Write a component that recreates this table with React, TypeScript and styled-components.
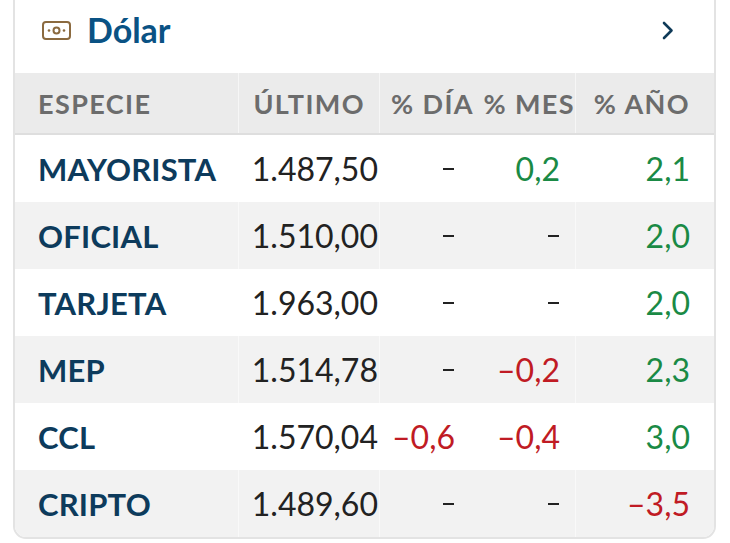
import React from "react";
import styled, { createGlobalStyle } from "styled-components";

const Global = createGlobalStyle`
  html, body { margin: 0; padding: 0; background: #ffffff; }
  body { font-family: Lato, "Open Sans", sans-serif; }
`;

const Page = styled.div`
  padding: 0 14px 0 13px;
  overflow: hidden;
  height: 543px;
  box-sizing: border-box;
`;

const Card = styled.div`
  margin-top: -14px;
  border: 2px solid #e3e3e3;
  border-radius: 13px;
  overflow: hidden;
  background: #fff;
`;

const TitleBar = styled.div`
  height: 85px;
  display: flex;
  align-items: center;
  padding: 0 40px 0 27px;
  box-sizing: border-box;
`;

const Title = styled.h2`
  margin: 0 0 0 16px;
  font-family: Lato, sans-serif;
  font-weight: 700;
  font-size: 34px;
  color: #0a5284;
  flex: 1;
  line-height: 1;
  position: relative;
  top: -1px;
`;

const columns = "223px 141px 101px 95px 1fr";

const HeadRow = styled.div`
  display: grid;
  grid-template-columns: ${columns};
  height: 60px;
  background: #ebebeb;
  border-bottom: 2px solid #dedede;
`;

const Row = styled.div<{ $alt: boolean }>`
  display: grid;
  grid-template-columns: ${columns};
  height: 67px;
  background: ${(p) => (p.$alt ? "#f2f2f2" : "#ffffff")};
`;

const HeadCell = styled.div<{ $pr: number; $left?: boolean; $divider?: boolean }>`
  display: flex;
  align-items: center;
  justify-content: ${(p) => (p.$left ? "flex-start" : "flex-end")};
  padding: ${(p) => (p.$left ? "0 0 0 23px" : `0 ${p.$pr}px 0 0`)};
  font-family: Lato, sans-serif;
  font-weight: 700;
  font-size: 27px;
  letter-spacing: 1.4px;
  color: #6c6c6c;
  white-space: nowrap;
  border-left: ${(p) => (p.$divider ? "1px solid rgba(255,255,255,0.55)" : "none")};
`;

const NameCell = styled.div`
  display: flex;
  align-items: center;
  padding-left: 23px;
  font-family: Lato, sans-serif;
  font-weight: 700;
  font-size: 31px;
  letter-spacing: 0.2px;
  color: #0d3b5c;
`;

type Tone = "up" | "down" | "flat";

const ValueCell = styled.div<{ $pr: number; $tone: Tone; $divider?: boolean }>`
  display: flex;
  align-items: center;
  justify-content: flex-end;
  padding-right: ${(p) => p.$pr}px;
  font-family: Lato, sans-serif;
  font-weight: 400;
  font-size: 32px;
  white-space: nowrap;
  color: ${(p) =>
    p.$tone === "up" ? "#1a8a45" : p.$tone === "down" ? "#c01b24" : "#222222"};
  border-left: ${(p) => (p.$divider ? "1px solid rgba(255,255,255,0.55)" : "none")};
`;

const Dash = styled.span`
  display: inline-block;
  width: 11px;
  height: 2px;
  background: #222;
  margin-right: 1px;
`;

const BillIcon = () => (
  <svg width="29" height="19" viewBox="0 0 29 19" fill="none">
    <rect x="1" y="1" width="27" height="17" rx="3" stroke="#8b6a3f" strokeWidth="2" />
    <circle cx="14.5" cy="9.5" r="3" stroke="#8b6a3f" strokeWidth="2" />
    <circle cx="7" cy="9.5" r="1.3" fill="#8b6a3f" />
    <circle cx="22" cy="9.5" r="1.3" fill="#8b6a3f" />
  </svg>
);

const Chevron = () => (
  <svg width="12" height="19" viewBox="0 0 12 19" fill="none">
    <path d="M2 2 L9.5 9.5 L2 17" stroke="#0f3a58" strokeWidth="2.6" strokeLinecap="round" strokeLinejoin="round" />
  </svg>
);

type Rec = { name: string; last: string; dia: string; mes: string; anio: string };

const data: Rec[] = [
  { name: "MAYORISTA", last: "1.487,50", dia: "-", mes: "0,2", anio: "2,1" },
  { name: "OFICIAL", last: "1.510,00", dia: "-", mes: "-", anio: "2,0" },
  { name: "TARJETA", last: "1.963,00", dia: "-", mes: "-", anio: "2,0" },
  { name: "MEP", last: "1.514,78", dia: "-", mes: "-0,2", anio: "2,3" },
  { name: "CCL", last: "1.570,04", dia: "-0,6", mes: "-0,4", anio: "3,0" },
  { name: "CRIPTO", last: "1.489,60", dia: "-", mes: "-", anio: "-3,5" },
];

const toneOf = (v: string): Tone => (v === "-" ? "flat" : v.startsWith("-") ? "down" : "up");

const show = (v: string) => (v === "-" ? <Dash /> : v.replace("-", "\u2013"));

export default function App() {
  return (
    <>
      <Global />
      <Page>
        <Card>
          <TitleBar>
            <BillIcon />
            <Title>Dólar</Title>
            <Chevron />
          </TitleBar>
          <HeadRow>
            <HeadCell $pr={0} $left>ESPECIE</HeadCell>
            <HeadCell $pr={14} $divider>ÚLTIMO</HeadCell>
            <HeadCell $pr={6} $divider>% DÍA</HeadCell>
            <HeadCell $pr={0}>% MES</HeadCell>
            <HeadCell $pr={24} $divider>% AÑO</HeadCell>
          </HeadRow>
          {data.map((r, i) => (
            <Row key={r.name} $alt={i % 2 === 1}>
              <NameCell>{r.name}</NameCell>
              <ValueCell $pr={1} $tone="flat" $divider>{r.last}</ValueCell>
              <ValueCell $pr={25} $tone={toneOf(r.dia)} $divider>{show(r.dia)}</ValueCell>
              <ValueCell $pr={15} $tone={toneOf(r.mes)}>{show(r.mes)}</ValueCell>
              <ValueCell $pr={24} $tone={toneOf(r.anio)} $divider>{show(r.anio)}</ValueCell>
            </Row>
          ))}
        </Card>
      </Page>
    </>
  );
}
